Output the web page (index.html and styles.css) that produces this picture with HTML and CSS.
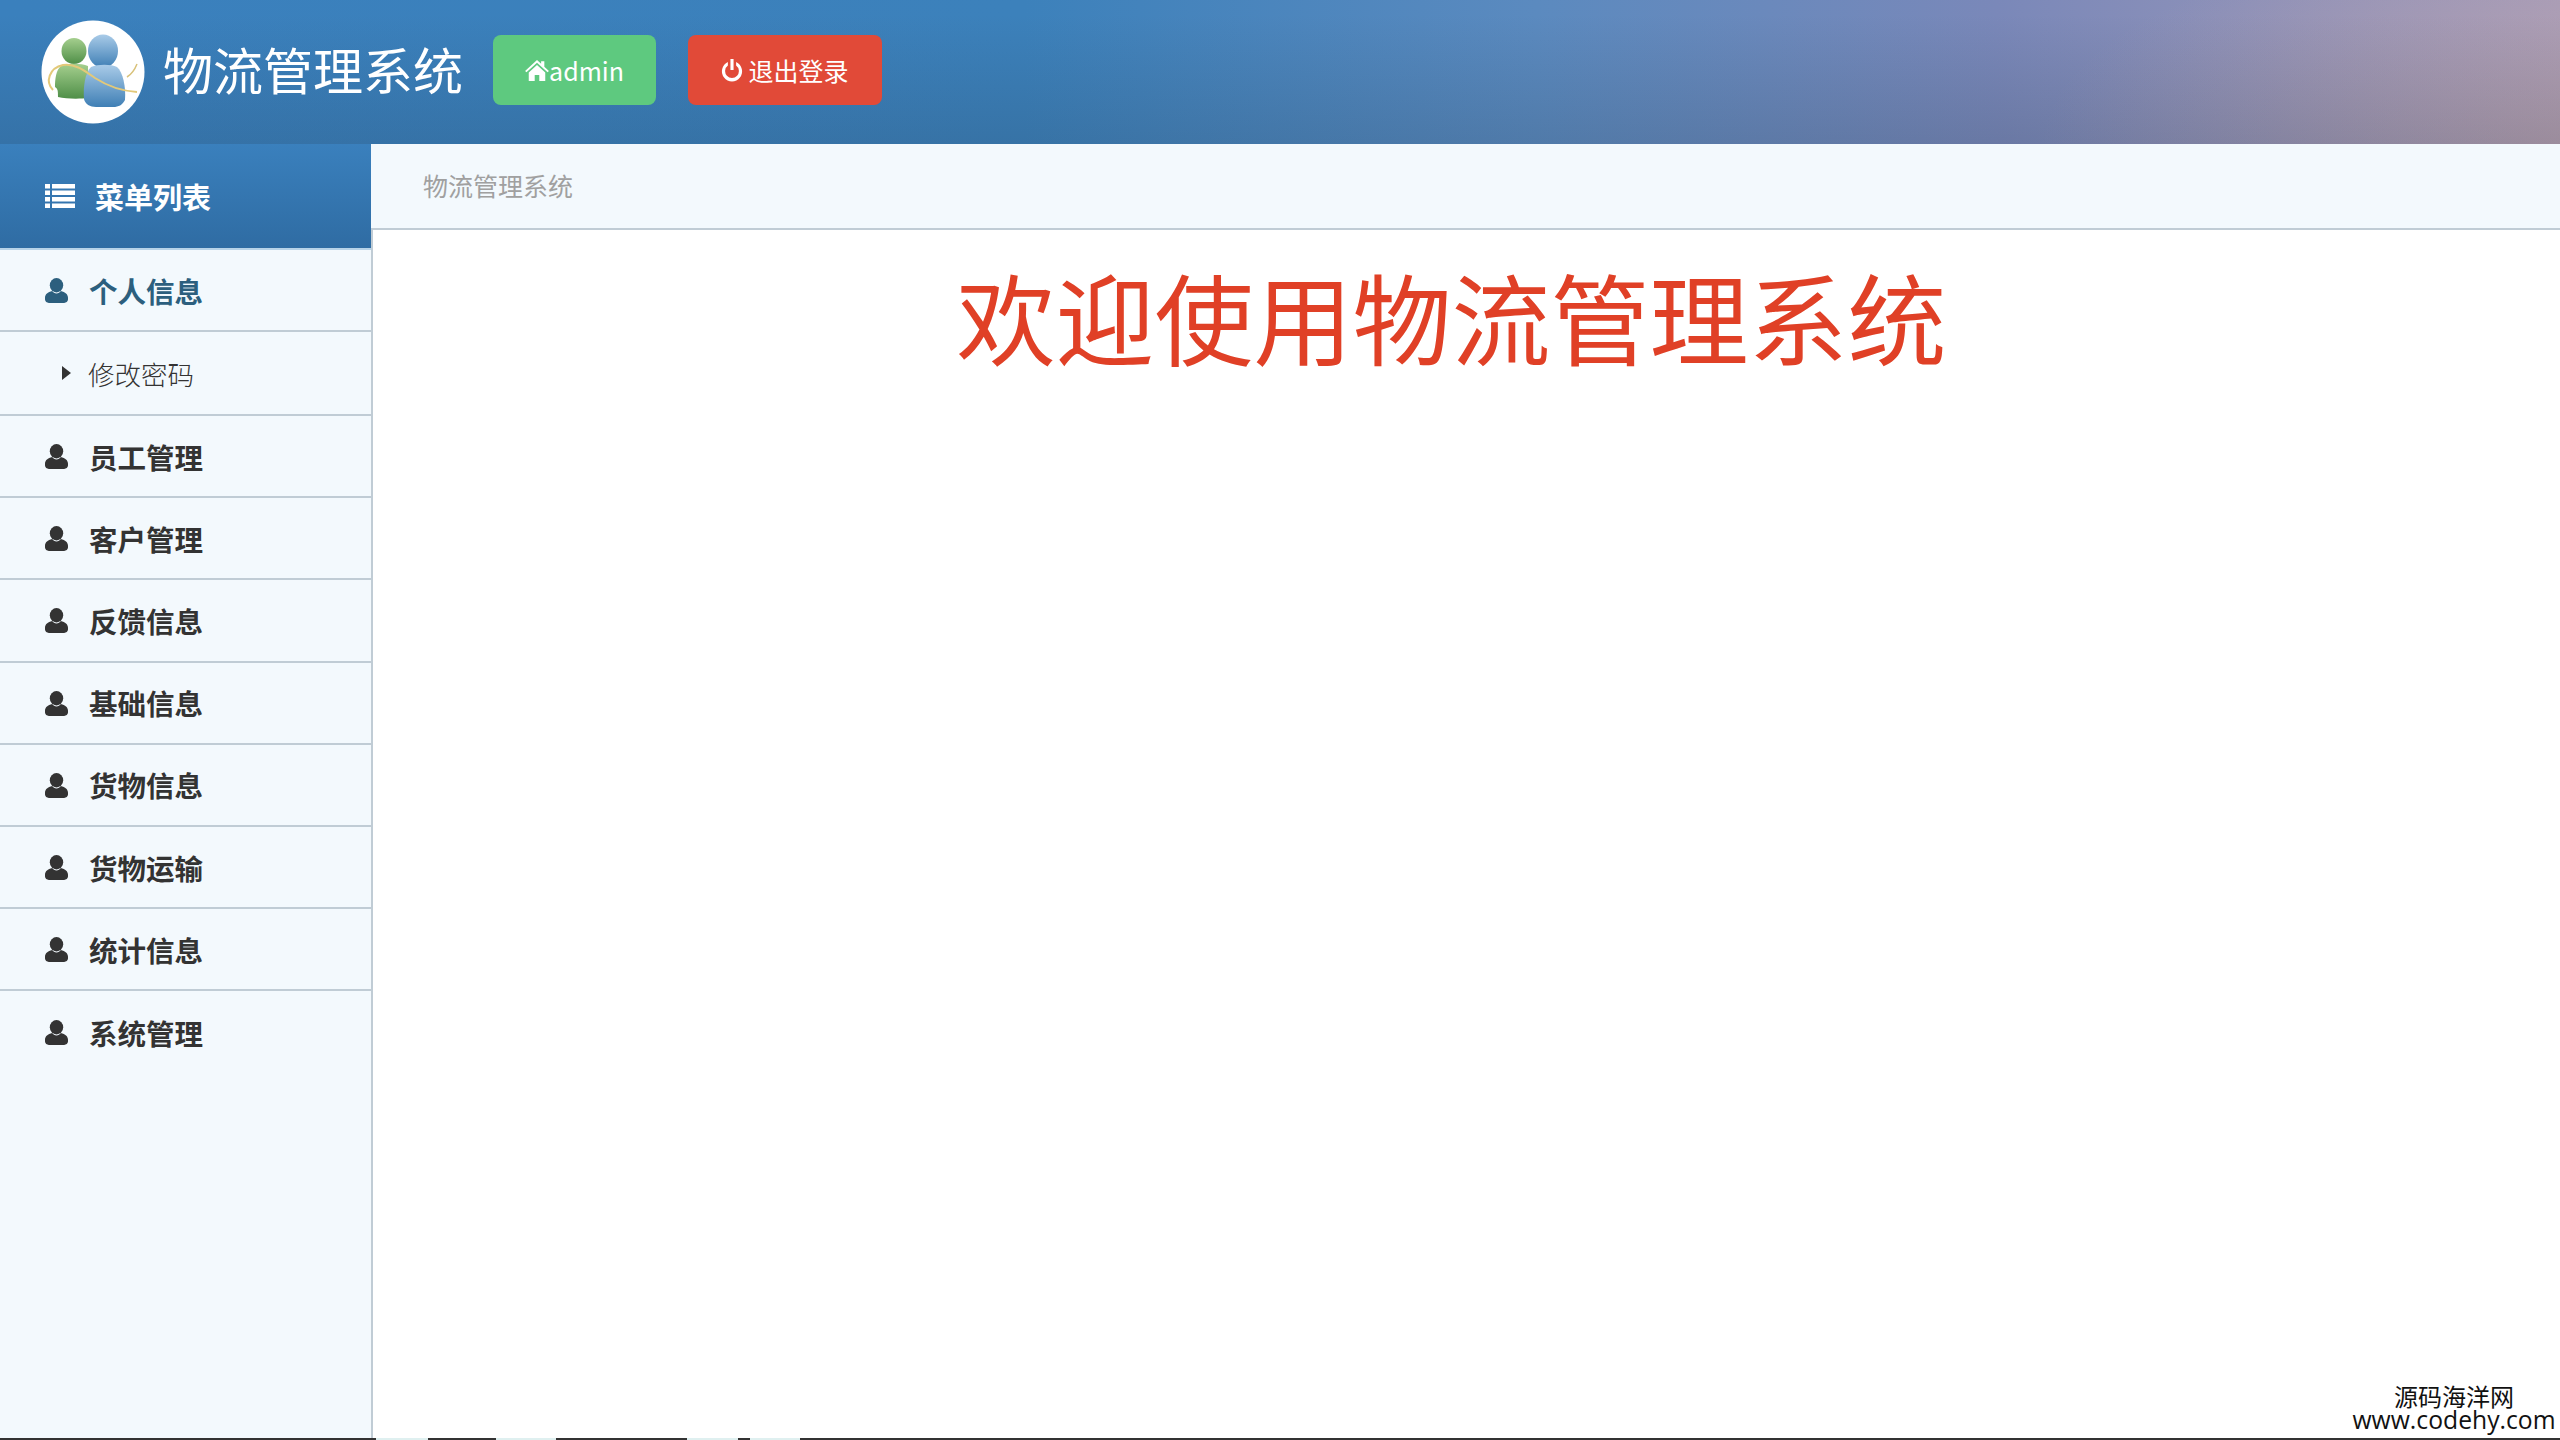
FILE: index.html
```html
<!DOCTYPE html>
<html lang="zh-CN">
<head>
  <meta charset="UTF-8" />
  <title>物流管理系统</title>
  <link rel="stylesheet" href="styles.css">
</head>
<body>

  <svg class="icon-defs" aria-hidden="true">
    <symbol id="i-user" viewBox="0 0 24 26">
      <ellipse cx="12" cy="7.5" rx="7" ry="7.5" />
      <path d="M7.500 13.500C3 14.500 0 17 0 20.500v2C0 24.500 2 26 4 26h16c2 0 4-1.500 4-3.500v-2c0-3.500-3-6-7.500-7-1 1.500-2.700 2.500-4.500 2.500s-3.500-1-4.500-2.500z" />
    </symbol>
    <symbol id="i-home" viewBox="0 0 26 24">
      <path d="M13 1 0 13l1.500 1.500L13 4l11.500 10.500L26 13l-5-4.600V2.500h-3.500v2.700z" />
      <path d="M13 6.500 4 14.700V24h6.500v-6.500h5V24H22v-9.300z" />
    </symbol>
    <symbol id="i-off" viewBox="0 0 24 24">
      <path d="M10.300 0h3.400v12h-3.400z" />
      <path d="M7.500 3.400v3.800a7.500 7.500 0 1 0 9 0V3.400a11 11 0 1 1-9 0z" />
    </symbol>
    <symbol id="i-list" viewBox="0 0 30 24">
      <path d="M0 0h5v4.500H0zM7 0h23v4.500H7zM0 6.500h5V11H0zM7 6.500h23V11H7zM0 13h5v4.500H0zM7 13h23v4.500H7zM0 19.500h5V24H0zM7 19.500h23V24H7z" />
    </symbol>
    <symbol id="i-right" viewBox="0 0 9 14">
      <path d="M0 0l9 7-9 7z" />
    </symbol>
  </svg>

  <!-- top bar -->
  <header class="top-bar">
    <svg class="logo" viewBox="0 0 104 104" aria-hidden="true">
      <defs>
        <linearGradient id="g-green" x1="0" y1="0" x2="0" y2="1">
          <stop offset="0" stop-color="#a5cf8e" />
          <stop offset="1" stop-color="#4f8f48" />
        </linearGradient>
        <linearGradient id="g-blue" x1="0" y1="0" x2="0" y2="1">
          <stop offset="0" stop-color="#a9cbe8" />
          <stop offset="1" stop-color="#3f7fb5" />
        </linearGradient>
      </defs>
      <circle cx="52" cy="52" r="51.500" fill="#fff" />
      <ellipse cx="33" cy="31" rx="12.500" ry="13" fill="url(#g-green)" />
      <path d="M20 46c6-3 20-3 27 0v32c-8 1-22 1-30-1 0-6 0-8-3-10 0-8 1-17 6-21z" fill="url(#g-green)" />
      <ellipse cx="62" cy="31" rx="15" ry="16.500" fill="url(#g-blue)" />
      <path d="M50 47c7-3 20-3 26 0 6 5 9 20 8 33-3 5-6 7-12 7H55c-6 0-11-3-12-8-1-12 1-26 7-32z" fill="url(#g-blue)" />
      <path d="M96 44c-2 5-5 10-10 13" fill="none" stroke="#d9c27a" stroke-width="1.500" />
      <path d="M12 70C4 62 8 48 22 45c12-2 22 6 32 13 14 9 26 13 42 14" fill="none" stroke="#e3c979" stroke-width="2" />
    </svg>
    <h1 class="brand">物流管理系统</h1>
    <a class="btn btn-green" href="#">
      <svg class="btn-icon"><use href="#i-home" /></svg>admin
    </a>
    <a class="btn btn-red" href="#">
      <svg class="btn-icon"><use href="#i-off" /></svg>退出登录
    </a>
  </header>

  <div class="page">
    <!-- left menu -->
    <aside class="sidebar">
      <div class="sidebar-title">
        <svg class="list-icon"><use href="#i-list" /></svg>
        <span>菜单列表</span>
      </div>
      <ul class="menu">
        <li class="menu-item first active"><svg class="user-icon"><use href="#i-user" /></svg>个人信息</li>
        <li class="sub-item"><svg class="arrow-icon"><use href="#i-right" /></svg>修改密码</li>
        <li class="menu-item"><svg class="user-icon"><use href="#i-user" /></svg>员工管理</li>
        <li class="menu-item"><svg class="user-icon"><use href="#i-user" /></svg>客户管理</li>
        <li class="menu-item"><svg class="user-icon"><use href="#i-user" /></svg>反馈信息</li>
        <li class="menu-item"><svg class="user-icon"><use href="#i-user" /></svg>基础信息</li>
        <li class="menu-item"><svg class="user-icon"><use href="#i-user" /></svg>货物信息</li>
        <li class="menu-item"><svg class="user-icon"><use href="#i-user" /></svg>货物运输</li>
        <li class="menu-item"><svg class="user-icon"><use href="#i-user" /></svg>统计信息</li>
        <li class="menu-item last"><svg class="user-icon"><use href="#i-user" /></svg>系统管理</li>
      </ul>
    </aside>

    <main class="main">
      <div class="breadcrumb">物流管理系统</div>
      <div class="content">
        <h2 class="welcome">欢迎使用物流管理系统</h2>
      </div>
    </main>
  </div>

  <div class="bottom-line"></div>

  <div class="watermark">
    <div class="wm-cn">源码海洋网</div>
    <div class="wm-url">www.codehy.com</div>
  </div>

</body>
</html>
```

FILE: styles.css
```css
* {
  box-sizing: border-box;
}

html,
body {
  height: 100%;
}

body {
  margin: 0;
  display: flex;
  flex-direction: column;
  background-color: #fff;
  color: #333;
  font-family: "Noto Sans CJK SC", "Noto Sans", sans-serif;
  overflow: hidden;
}

.icon-defs {
  display: none;
}

/* top bar */
.top-bar {
  height: 144px;
  flex: none;
  display: flex;
  align-items: center;
  padding-left: 41px;
  background:
    linear-gradient(to bottom, rgba(30, 50, 70, 0) 10%, rgba(30, 50, 70, 0.18) 100%),
    radial-gradient(ellipse 520px 210px at 100% 100%, rgba(205, 165, 165, 0.45), rgba(205, 165, 165, 0)),
    linear-gradient(to right, #3a80bd 0%, #3c81bb 40%, #5b8abf 60%, #7a88b9 78%, #a59cb8 100%);
}

.logo {
  width: 104px;
  height: 104px;
  flex: none;
}

.brand {
  margin: 0 30px 8px 18px;
  font-size: 50px;
  font-weight: 400;
  line-height: 1;
  color: #fff;
  white-space: nowrap;
}

.btn {
  height: 70px;
  margin-bottom: 4px;
  display: flex;
  align-items: center;
  justify-content: center;
  border-radius: 8px;
  color: #fff;
  font-size: 25px;
  text-decoration: none;
}

.btn-icon {
  fill: #fff;
  flex: none;
}

.btn-green {
  width: 163px;
  margin-right: 32px;
  background-color: #5ec97f;
}

.btn-green .btn-icon {
  width: 24px;
  height: 22px;
}

.btn-red {
  width: 194px;
  background-color: #e14a38;
}

.btn-red .btn-icon {
  width: 22px;
  height: 24px;
  margin-right: 5px;
}

/* page body */
.page {
  flex: 1;
  display: flex;
  min-height: 0;
}

.sidebar {
  width: 371px;
  flex: none;
  background-color: #f3f9fd;
}

.sidebar-title {
  height: 106px;
  display: flex;
  align-items: center;
  padding-left: 45px;
  border-bottom: 2px solid #b7d3e8;
  background: linear-gradient(to bottom, #3a80bd, #2f6ca3);
  color: #fff;
  font-size: 29px;
  font-weight: 700;
}

.list-icon {
  width: 30px;
  height: 24px;
  margin-right: 20px;
  fill: #fff;
}

.menu {
  margin: 0;
  padding: 0;
  list-style: none;
}

.menu-item,
.sub-item {
  display: flex;
  align-items: center;
  border-bottom: 2px solid #c0ccd5;
}

.menu-item {
  height: 82.2px;
  padding-left: 45px;
  font-size: 28.500px;
  font-weight: 700;
  color: #333;
}

.menu-item.first {
  height: 82px;
}

.menu-item.last {
  border-bottom: none;
}

.menu-item.active {
  color: #2c5f7e;
}

.sub-item {
  height: 84px;
  padding-left: 62px;
  font-size: 26.500px;
  font-weight: 300;
  color: #333;
}

.user-icon {
  width: 23px;
  height: 25px;
  margin: 1px 21px 0 0;
  fill: currentColor;
  flex: none;
}

.arrow-icon {
  width: 9px;
  height: 14px;
  margin-right: 17px;
  fill: #333;
  flex: none;
}

/* right side */
.main {
  flex: 1;
  min-width: 0;
  display: flex;
  flex-direction: column;
}

.breadcrumb {
  height: 86px;
  flex: none;
  display: flex;
  align-items: center;
  padding: 0 0 2px 52px;
  border-bottom: 2px solid #c0ccd5;
  background-color: #f3f9fd;
  color: #a0a0a0;
  font-size: 25px;
}

.content {
  flex: 1;
  border-left: 2px solid #c0ccd5;
  padding-right: 30px;
}

.welcome {
  margin: 0;
  text-align: center;
  line-height: 170px;
  font-size: 99px;
  font-weight: 400;
  color: #e04026;
}

.bottom-line {
  height: 2px;
  flex: none;
  background: linear-gradient(to right,
    #333 0, #333 376px,
    #dff0f0 376px, #dff0f0 428px,
    #333 428px, #333 496px,
    #dff0f0 496px, #dff0f0 556px,
    #333 556px, #333 687px,
    #dff0f0 687px, #dff0f0 738px,
    #333 738px, #333 750px,
    #dff0f0 750px, #dff0f0 800px,
    #333 800px, #333 100%);
}

/* site stamp, sits over the page corner */
.watermark {
  position: absolute;
  right: 4px;
  bottom: 7px;
  width: 204px;
  color: #111;
  text-align: center;
  line-height: 1;
}

.wm-cn {
  font-size: 24px;
  height: 24px;
}

.wm-url {
  font-family: "Open Sans", sans-serif;
  font-size: 24.700px;
  white-space: nowrap;
}
```
